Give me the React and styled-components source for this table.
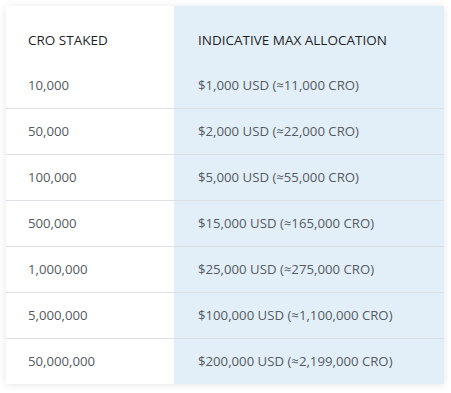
import styled, { createGlobalStyle } from "styled-components"

const GlobalStyle = createGlobalStyle`
    html, body {
        margin: 0;
        padding: 0;
        background: #ffffff;
    }
    body {
        font-family: "Open Sans", "Noto Sans", sans-serif;
    }
`

const Page = styled.div`
    padding: 6px;
    width: 438px;
`

const Card = styled.div`
    background: #ffffff;
    box-shadow: 0 1px 8px rgba(0, 0, 0, 0.1);
`

const Table = styled.table`
    width: 100%;
    border-collapse: collapse;
    table-layout: fixed;

    th, td {
        box-sizing: border-box;
    }
`

const HeadRow = styled.tr`
    height: 56px;
`

const Row = styled.tr`
    height: 46px;
    border-bottom: 1px solid #dcdfe3;

    &:last-child {
        border-bottom: none;
    }
`

const HeadCell = styled.th`
    padding: 12px 0 0 ${(p) => (p.$alloc ? "24px" : "22px")};
    text-align: left;
    font-weight: 400;
    font-size: 13.5px;
    color: #1f1f1f;
    background: ${(p) => (p.$alloc ? "#e2eff9" : "transparent")};
    width: ${(p) => (p.$alloc ? "auto" : "168px")};
`

const Cell = styled.td`
    padding: 0 0 0 ${(p) => (p.$alloc ? "24px" : "22px")};
    font-size: 13.2px;
    color: #555a60;
    background: ${(p) => (p.$alloc ? "#e2eff9" : "transparent")};
`

const rows = [
    ["10,000", "$1,000 USD (≈11,000 CRO)"],
    ["50,000", "$2,000 USD (≈22,000 CRO)"],
    ["100,000", "$5,000 USD (≈55,000 CRO)"],
    ["500,000", "$15,000 USD (≈165,000 CRO)"],
    ["1,000,000", "$25,000 USD (≈275,000 CRO)"],
    ["5,000,000", "$100,000 USD (≈1,100,000 CRO)"],
    ["50,000,000", "$200,000 USD (≈2,199,000 CRO)"],
]

const App = () => {
    return (
        <Page>
            <GlobalStyle />
            <Card>
                <Table>
                    <thead>
                        <HeadRow>
                            <HeadCell>CRO STAKED</HeadCell>
                            <HeadCell $alloc>INDICATIVE MAX ALLOCATION</HeadCell>
                        </HeadRow>
                    </thead>
                    <tbody>
                        {rows.map(([staked, alloc]) => (
                            <Row key={staked}>
                                <Cell>{staked}</Cell>
                                <Cell $alloc>{alloc}</Cell>
                            </Row>
                        ))}
                    </tbody>
                </Table>
            </Card>
        </Page>
    )
}

export default App
